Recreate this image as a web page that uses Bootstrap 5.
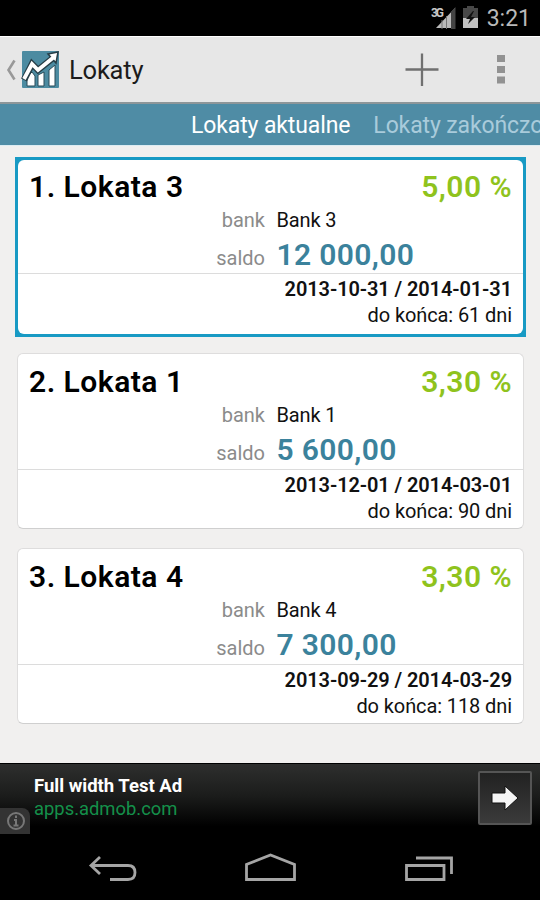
<!DOCTYPE html>
<html lang="pl">
<head>
<meta charset="utf-8">
<meta name="viewport" content="width=device-width, initial-scale=1">
<title>Lokaty</title>
<link href="https://cdn.jsdelivr.net/npm/bootstrap@5.3.0/dist/css/bootstrap.min.css" rel="stylesheet">
<style>
body{font-family:Roboto,"Liberation Sans",sans-serif;background:#000;width:540px;height:900px;color:#111}
svg{display:block;flex:none}
.status{height:36px;padding-right:9px;color:#b9b9b9;font-size:23px;line-height:38px}
.action{height:68px;background:#e7e7e7;border-top:1px solid #fff;border-bottom:2px solid #8d9699;box-sizing:border-box}
.action h1{font-size:25.5px;line-height:66px;margin:0 0 0 9px;font-weight:400;letter-spacing:-.2px;color:#1b1b1b}
.pager{height:41px;background:#4f8ca5;font-size:23px;line-height:44px;color:#fff;padding-left:191px;gap:23px;letter-spacing:-.12px}
.pager .later{color:#a9cbdb}
.deposits{height:618px;background:#f1f0ef;border-top:1px solid #dcecf2;padding:14px 16px 0 17px}
.deposit{height:176px;background:#fff;border:1px solid #dedddd;border-radius:6px;margin-bottom:19px;border-bottom-color:#cfcfcf}
.frame{background:#189ac4;margin:-3px -2px 16px;padding:3px;height:180px}
.frame .deposit{margin:0;height:174px;border:0}
.top-part{height:116px;border-bottom:1px solid #dcdcdc;padding:10px 11px 0 11px}
.frame .top-part{height:114px;padding:9px 11px 0 11px}
.heading{font-size:30px;line-height:36px;font-weight:600;color:#000;letter-spacing:.5px}
.rate{color:#8fc31d;letter-spacing:.5px;margin-right:-.2px}
.pair{display:grid;grid-template-columns:236px 1fr;column-gap:11.5px;align-items:baseline;font-size:20px;line-height:31px}
.pair dt{font-weight:400;color:#8b8b8b;text-align:right}
.pair dd{margin:0;letter-spacing:-.15px}
.pair .amount{font-size:30px;line-height:38px;font-weight:600;color:#3b829c;letter-spacing:.35px}
.term{font-size:20px;line-height:26.5px;text-align:right;padding:1.6px 11px 0;letter-spacing:-.1px}
.term .dates{letter-spacing:-.1px;font-weight:600}
.ad{height:72px;background:linear-gradient(#2e2f2e,#1b1c1b 45%,#000 88%);border-top:1px solid #000;padding:7px 8px 0 34px}
.ad .name{color:#fff;font-weight:700;font-size:18.5px;line-height:30px}
.ad .site{color:#14904a;font-size:18.4px;line-height:16px}
.go{width:54px;height:54px;border:2px solid #555;border-radius:2px;background:linear-gradient(#222,#3b3b3b)}
.info{left:0;top:44px;width:30px;height:26px;background:#333;border-radius:0 8px 0 0}
.keys{height:65px}
</style>
</head>
<body class="overflow-hidden m-0">
<header>
  <div class="status d-flex justify-content-end">
    <svg width="27" height="36" viewBox="0 0 27 36"><path d="M5 28 24 8V28Z" fill="#bbb"/><path d="M20 12 24.500 7V29H20Z" fill="#444"/><path d="M11 20V29M15.500 16V29" stroke="#777"/><text x="0" y="17" font-size="12" font-weight="700" fill="#c8c8c8" textLength="13">3G</text></svg>
    <svg class="ms-1 me-2" width="17" height="36" viewBox="0 0 17 36"><path d="M1 8h4V6h7v2h4v20H1Z" fill="#484848"/><path d="M1 18h15v10H1Z" fill="#c1c1c1"/><path d="m11 11-7 8h4l-2 5 7-7H9l3-6Z" fill="#111"/></svg>
    <span>3:21</span>
  </div>
  <nav class="action d-flex">
    <svg width="60" height="66" viewBox="0 0 60 66"><path d="m14.500 23.500-6 9.500 6 9.500" fill="none" stroke="#999" stroke-width="2.600"/><rect x="22" y="14" width="37" height="37" rx="1" fill="#4c8ba1"/><path d="M27 49V40l5-5 3 4v10ZM38 49V38l6-3v14ZM49 49V33l6-5v21Z" fill="#fff" stroke="#294b58"/><path d="M24 43 32 27l6 6 15-12" fill="none" stroke="#263d46" stroke-width="6.500"/><path d="m48 17 10-2-2 11Z" fill="#fff" stroke="#263d46" stroke-width="1.500"/><path d="m24 42 8-15 6 6 16-13" fill="none" stroke="#fff" stroke-width="3.800"/></svg>
    <h1>Lokaty</h1>
    <svg class="ms-auto" width="135" height="66" viewBox="0 0 135 66"><path d="M17 16.500V49M.5 32.500H33.500" fill="none" stroke="#707070" stroke-width="2.300"/><path d="M92 18h8v7h-8ZM92 29h8v7h-8ZM92 39.500h8v7h-8Z" fill="#929292"/></svg>
  </nav>
  <div class="pager d-flex text-nowrap overflow-hidden"><span>Lokaty aktualne</span><span class="later">Lokaty zakończone</span></div>
</header>
<main class="deposits">
  <div class="frame"><section class="deposit">
    <div class="top-part">
      <div class="heading d-flex justify-content-between"><span>1. Lokata 3</span><span class="rate">5,00 %</span></div>
      <dl class="pair m-0"><dt>bank</dt><dd>Bank 3</dd><dt>saldo</dt><dd class="amount">12 000,00</dd></dl>
    </div>
    <div class="term"><div class="dates">2013-10-31 / 2014-01-31</div><div>do końca: 61 dni</div></div>
  </section></div>
  <section class="deposit">
    <div class="top-part">
      <div class="heading d-flex justify-content-between"><span>2. Lokata 1</span><span class="rate">3,30 %</span></div>
      <dl class="pair m-0"><dt>bank</dt><dd>Bank 1</dd><dt>saldo</dt><dd class="amount">5 600,00</dd></dl>
    </div>
    <div class="term"><div class="dates">2013-12-01 / 2014-03-01</div><div>do końca: 90 dni</div></div>
  </section>
  <section class="deposit">
    <div class="top-part">
      <div class="heading d-flex justify-content-between"><span>3. Lokata 4</span><span class="rate">3,30 %</span></div>
      <dl class="pair m-0"><dt>bank</dt><dd>Bank 4</dd><dt>saldo</dt><dd class="amount">7 300,00</dd></dl>
    </div>
    <div class="term"><div class="dates">2013-09-29 / 2014-03-29</div><div>do końca: 118 dni</div></div>
  </section>
</main>
<footer>
  <div class="ad position-relative d-flex justify-content-between">
    <div><div class="name">Full width Test Ad</div><div class="site">apps.admob.com</div></div>
    <div class="go d-flex align-items-center justify-content-center"><svg width="28" height="26" viewBox="0 0 28 26"><path d="M1 8h13V1l13 12-13 12v-7H1Z" fill="#f5f5f5" stroke="#111" stroke-width="1"/></svg></div>
    <div class="info position-absolute"><svg width="30" height="26" viewBox="0 0 30 26" fill="none" stroke="#777" stroke-width="2"><circle cx="16" cy="13" r="8"/><path d="M16 7.500v2.500M14 12h2v5M13.500 17.500h5"/></svg></div>
  </div>
  <svg class="keys" width="540" height="65" viewBox="0 835 540 65" fill="none" stroke="#a5a5a5" stroke-width="2.800"><path d="m100 857-9 8.500 9 8.500M91 865.500H128Q135 865.500 135 872.500 135 879.500 128 879.500H110M246.500 879.500V864.500L270.500 855 294.500 864.500V879.500ZM406.500 865.500H444V879.500H406.500ZM416 858H451.500V874"/></svg>
</footer>
<script src="https://cdn.jsdelivr.net/npm/bootstrap@5.3.0/dist/js/bootstrap.bundle.min.js"></script>
</body>
</html>
